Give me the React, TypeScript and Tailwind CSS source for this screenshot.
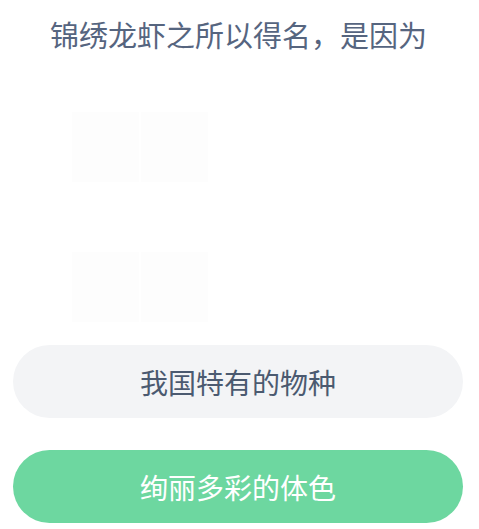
import React from 'react';

const options = [
  { text: '我国特有的物种', correct: false },
  { text: '绚丽多彩的体色', correct: true },
];

const App = () => {
  return (
    <div
      className="w-[479px] h-[529px] bg-white overflow-hidden flex flex-col"
      style={{ fontFamily: '"Noto Sans CJK SC", "Noto Sans", sans-serif' }}
    >
      <div className="pl-[50px] pt-[12px] text-[29px] leading-[44px] text-[#56657f]">
        锦绣龙虾之所以得名，是因为
      </div>

      {/* faded picture behind the question */}
      <div className="ml-[72px] mt-[56px] grid grid-cols-2 gap-x-[2px] gap-y-[70px] w-[136px]">
        <div className="h-[70px] bg-[#fdfdfd]"></div>
        <div className="h-[70px] bg-[#fdfdfd]"></div>
        <div className="h-[70px] bg-[#fdfdfd]"></div>
        <div className="h-[70px] bg-[#fdfdfd]"></div>
      </div>

      <div className="mt-[23px] flex flex-col gap-[32px] pl-[13px] pr-[16px]">
        {options.map((o) => (
          <div
            key={o.text}
            className={
              o.correct
                ? 'h-[73px] rounded-full bg-[#6dd7a0] text-white flex items-center justify-center text-[28px]'
                : 'h-[73px] rounded-full bg-[#f3f4f6] text-[#4b5a70] flex items-center justify-center text-[28px]'
            }
          >
            {o.text}
          </div>
        ))}
      </div>
    </div>
  );
};

export default App;
